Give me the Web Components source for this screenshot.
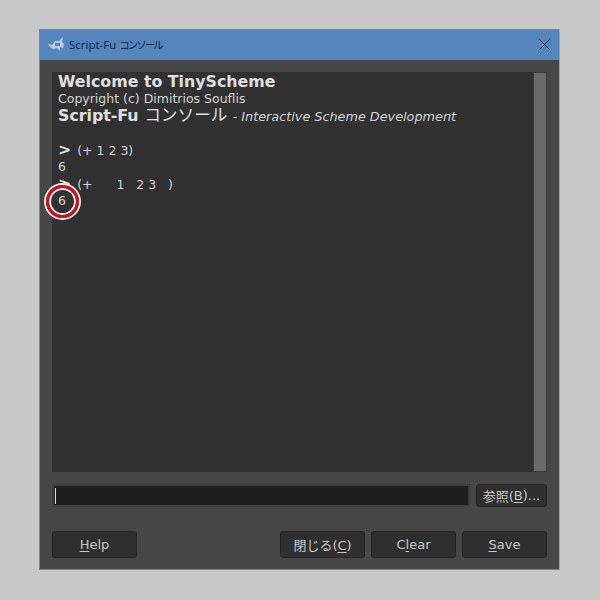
<!DOCTYPE html>
<html>
<head>
<meta charset="utf-8">
<title>Script-Fu</title>
<style>
  html, body { margin: 0; padding: 0; background: #c8c8c8; }
  body { width: 600px; height: 600px; overflow: hidden; font-family: "DejaVu Sans", "Noto Sans CJK JP", sans-serif; }
</style>
</head>
<body>
<sf-window>
  <sf-console></sf-console>
  <sf-input></sf-input>
  <sf-actions></sf-actions>
</sf-window>
<script>
const FONT = `"DejaVu Sans", "Noto Sans CJK JP", sans-serif`;

class SfWindow extends HTMLElement {
  constructor() {
    super();
    this.attachShadow({ mode: "open" }).innerHTML = `
    <style>
      :host { display: block; box-sizing: border-box; width: 521px; height: 541px; margin: 29px 0 0 39px;
        background: #474747; border: 1px solid #6f86a5; border-top: 0; border-right-color: #8fa0b8; font-family: ${FONT}; }
      .title { display: flex; align-items: center; height: 31px; box-sizing: border-box; background: #5585bd; border-top: 1px solid #6b8cb6; color: #10243f;
        font: 11.5px "Open Sans", "Noto Sans CJK JP", sans-serif; padding: 0 9px 1px 8px; gap: 4px; }
      .title span { flex: 1; }
      .title i { font-style: normal; font-size: 10.5px; letter-spacing: -2px; }
      .body { display: flex; flex-direction: column; padding: 12px 12px 11px 12px; height: 509px; box-sizing: border-box; }
    </style>
    <div class="title">
      <svg width="17" height="15" viewBox="0 0 17 15">
        <path d="M0 7 L4 8 L7 4 L11 4 L15 0 L14 5 L16 7 L15 11 L12 10 L12 14 L9 11 L5 12 L2 10 Z" fill="#b9cbe3"/>
        <path d="M7 6 h5 v3 h-5 z" fill="#6d7f97"/>
      </svg>
      <span>Script-Fu <i>コンソール</i></span>
      <svg width="11" height="11" viewBox="0 0 11 11"><path d="M.5 .5 L10.5 10.5 M10.5 .5 L.5 10.5" stroke="#14202e" fill="none"/></svg>
    </div>
    <div class="body"><slot></slot></div>`;
  }
}

class SfConsole extends HTMLElement {
  constructor() {
    super();
    this.attachShadow({ mode: "open" }).innerHTML = `
    <style>
      :host { display: flex; height: 400px; background: #313131; position: relative; color: #d4d4d4; flex: none; }
      .log { flex: 1; padding: 1px 6px 0; font-size: 12.5px; line-height: 17px; }
      .log div { height: 17px; white-space: pre; }
      .big { font-weight: bold; font-size: 15.8px; color: #e0e0e0; }
      .kana { font-weight: normal; font-size: 16.7px; }
      .it { font-style: italic; font-size: 12.8px; margin-left: 1px; }
      .cmd { margin-left: 2px; }
      .bar { width: 14px; box-sizing: border-box; background: #6a6a6a; border: 1px solid #3c3c3c; }
      .ring { position: absolute; left: -6.5px; top: 112.5px; width: 33px; height: 33px; box-sizing: border-box;
        border-radius: 50%; border: 3px solid #d0101f; box-shadow: 0 0 0 2px #f4ece8, inset 0 0 0 2px #f4ece8; }
    </style>
    <div class="log">
      <div class="big">Welcome to TinyScheme</div>
      <div>Copyright (c) Dimitrios Souflis</div>
      <div><span class="big">Script-Fu <span class="kana">コンソール</span></span><span class="it"> - Interactive Scheme Development</span></div>
      <div></div>
      <div><span class="big">&gt;</span><span class="cmd"> (+ 1 2 3)</span></div>
      <div>6</div>
      <div><span class="big">&gt;</span><span class="cmd"> (+      1   2 3   )</span></div>
      <div>6</div>
    </div>
    <div class="bar"></div>
    <div class="ring"></div>`;
  }
}

class SfButton extends HTMLElement {
  constructor() {
    super();
    this.attachShadow({ mode: "open" }).innerHTML = `
    <style>
      :host { display: flex; align-items: center; justify-content: center; box-sizing: border-box;
        width: var(--w, 85px); height: var(--h, 27px); background: #2f2f2f; border: 1px solid #252525; border-radius: 3px;
        color: #c8c8c8; font: 13px ${FONT}; flex: none; }
    </style><slot></slot>`;
  }
}

class SfInput extends HTMLElement {
  constructor() {
    super();
    this.attachShadow({ mode: "open" }).innerHTML = `
    <style>
      :host { display: flex; gap: 6px; margin-top: 12px; flex: none; height: 23px; align-items: stretch; }
      .entry { flex: 1; background: #1f1f1f; border: 2px solid #3d3d3d; border-bottom-color: #414141; display: flex; align-items: center; padding-left: 1px; }
      .caret { width: 1px; height: 16px; background: #e0e0e0; }
      sf-button { --w: 71px; --h: 23px; }
      u { text-underline-offset: 2px; }
    </style>
    <div class="entry"><div class="caret"></div></div>
    <sf-button>参照(<u>B</u>)...</sf-button>`;
  }
}

class SfActions extends HTMLElement {
  constructor() {
    super();
    this.attachShadow({ mode: "open" }).innerHTML = `
    <style>
      :host { display: flex; gap: 6px; margin-top: auto; flex: none; }
      .sp { flex: 1; }
      u { text-underline-offset: 2px; }
    </style>
    <sf-button><span><u>H</u>elp</span></sf-button>
    <div class="sp"></div>
    <sf-button><span>閉じる(<u>C</u>)</span></sf-button>
    <sf-button><span>C<u>l</u>ear</span></sf-button>
    <sf-button><span><u>S</u>ave</span></sf-button>`;
  }
}

customElements.define("sf-window", SfWindow);
customElements.define("sf-console", SfConsole);
customElements.define("sf-button", SfButton);
customElements.define("sf-input", SfInput);
customElements.define("sf-actions", SfActions);
</script>
</body>
</html>
